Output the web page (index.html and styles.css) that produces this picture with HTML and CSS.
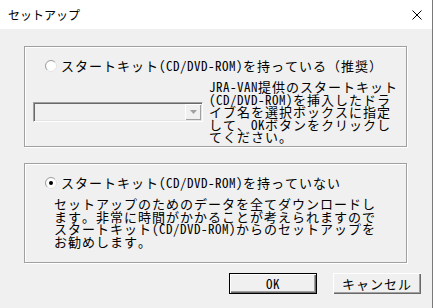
FILE: index.html
```html
<!DOCTYPE html>
<html lang="ja">
<head>
<meta charset="utf-8">
<title>セットアップ</title>
<link rel="stylesheet" href="styles.css">
</head>
<body>
<div class="window">
  <div class="titlebar">
    <span class="title">セットアップ</span>
    <svg class="close" width="10" height="10" viewBox="0 0 10 10"><path d="M0.5 0.5L9.5 9.5M9.5 0.5L0.5 9.5" stroke="#000" stroke-width="1" fill="none"/></svg>
  </div>
  <div class="content">
    <div class="group g1">
      <div class="radio-row">
        <svg class="radio" width="12" height="12" viewBox="0 0 12 12"><circle cx="6" cy="6" r="5.5" fill="#fff" stroke="#e3e3e3"/><path d="M2.11 9.89A5.5 5.5 0 0 1 9.89 2.11" stroke="#a0a0a0" fill="none"/></svg>
        <span>スタートキット<span class="lat">(CD/DVD-ROM)</span>を持っている（推奨）</span>
      </div>
      <div class="drive-row">
        <div class="combo">
          <div class="combo-btn"><svg width="7" height="4" viewBox="0 0 7 4"><path d="M0 0H7L3.5 4Z" fill="#a0a0a0"/></svg></div>
        </div>
        <p class="desc"><span class="lat">JRA-VAN</span>提供のスタートキット<br><span class="lat">(CD/DVD-ROM)</span>を挿入したドラ<br>イブ名を選択ボックスに指定<br>して、<span class="lat">OK</span>ボタンをクリックし<br>てください。</p>
      </div>
    </div>
    <div class="group g2">
      <div class="radio-row">
        <svg class="radio" width="12" height="12" viewBox="0 0 12 12"><circle cx="6" cy="6" r="5.5" fill="#fff" stroke="#e3e3e3"/><path d="M2.11 9.89A5.5 5.5 0 0 1 9.89 2.11" stroke="#a0a0a0" fill="none"/><circle cx="6" cy="6" r="2" fill="#000"/></svg>
        <span>スタートキット<span class="lat">(CD/DVD-ROM)</span>を持っていない</span>
      </div>
      <p class="desc d2">セットアップのためのデータを全てダウンロードし<br>ます。非常に時間がかかることが考えられますので<br>スタートキット<span class="lat">(CD/DVD-ROM)</span>からのセットアップを<br>お勧めします。</p>
    </div>
    <div class="buttons">
      <button class="btn default"><span class="lat">OK</span></button>
      <button class="btn">キャンセル</button>
    </div>
  </div>
</div>
</body>
</html>
```
FILE: styles.css
```css
html, body {
  margin: 0;
  padding: 0;
}
body {
  background: #f0f0f0;
  font-family: "Noto Sans Mono CJK JP", "Noto Sans CJK JP", monospace;
  font-size: 13px;
  letter-spacing: 1px;
  color: #000;
}
.lat {
  letter-spacing: 0.5px;
}
.window {
  width: 433px;
  height: 308px;
  box-sizing: border-box;
  border-right: 1px solid #7a7a7a;
  display: flex;
  flex-direction: column;
  overflow: hidden;
}
.titlebar {
  flex: none;
  height: 29px;
  background: #fff;
  display: flex;
  align-items: center;
  justify-content: space-between;
  padding: 0 10px 0 8px;
}
.title {
  font-family: "Noto Sans CJK JP", sans-serif;
  font-size: 12px;
  letter-spacing: 0;
}
.close {
  display: block;
}
.content {
  padding: 17px 11px 0 24px;
}
.group {
  width: 383px;
  box-sizing: border-box;
  border: 1px solid #a0a0a0;
  box-shadow: inset 1px 1px 0 #fff, 1px 1px 0 #fff;
  padding: 12px 0 0 20px;
}
.g1 {
  height: 101px;
}
.g2 {
  height: 100px;
  margin-top: 16px;
}
.radio-row {
  display: flex;
  align-items: center;
  gap: 4px;
  height: 14px;
  line-height: 14px;
  white-space: nowrap;
}
.radio {
  display: block;
  flex: none;
}
.drive-row {
  display: flex;
  align-items: center;
  gap: 6px;
  margin: 8px 0 0 -12px;
}
.combo {
  flex: none;
  width: 170px;
  height: 20px;
  box-sizing: border-box;
  border: 1px solid;
  border-color: #a0a0a0 #fff #fff #a0a0a0;
  box-shadow: inset 1px 1px 0 #696969, inset -1px -1px 0 #e3e3e3;
  background: #f0f0f0;
  padding: 1px;
  display: flex;
  justify-content: flex-end;
}
.combo-btn {
  width: 16px;
  height: 16px;
  box-sizing: border-box;
  background: #f0f0f0;
  box-shadow: inset 1px 1px 0 #fff, inset -1px -1px 0 #a0a0a0;
  display: flex;
  align-items: center;
  justify-content: center;
}
.combo-btn svg {
  display: block;
}
.desc {
  margin: 0;
  line-height: 12.5px;
  white-space: nowrap;
}
.d2 {
  margin: 8px 0 0 9px;
}
.buttons {
  display: flex;
  justify-content: flex-end;
  gap: 16px;
  margin-top: 10px;
}
.btn {
  width: 88px;
  height: 21px;
  box-sizing: border-box;
  padding: 0;
  margin: 0;
  font: inherit;
  letter-spacing: 1px;
  line-height: 14px;
  color: #000;
  background: #f0f0f0;
  border: none;
  box-shadow: inset 1px 1px 0 #fff, inset -1px -1px 0 #696969, inset -2px -2px 0 #a0a0a0;
}
.btn.default {
  border: 1px solid #000;
}
```
